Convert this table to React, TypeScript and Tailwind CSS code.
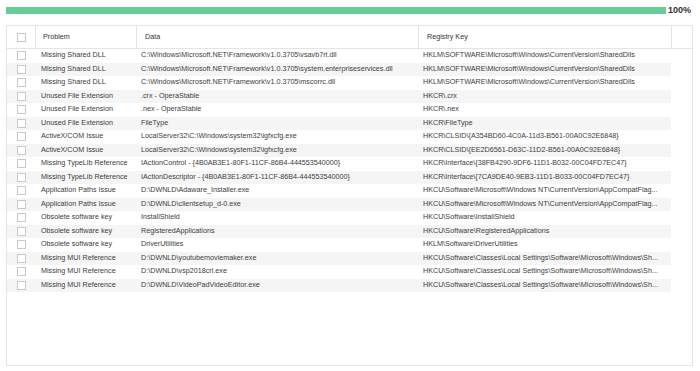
const rows: [string, string, string][] = [
  ["Missing Shared DLL", "C:\\Windows\\Microsoft.NET\\Framework\\v1.0.3705\\vsavb7rt.dll", "HKLM\\SOFTWARE\\Microsoft\\Windows\\CurrentVersion\\SharedDlls"],
  ["Missing Shared DLL", "C:\\Windows\\Microsoft.NET\\Framework\\v1.0.3705\\system.enterpriseservices.dll", "HKLM\\SOFTWARE\\Microsoft\\Windows\\CurrentVersion\\SharedDlls"],
  ["Missing Shared DLL", "C:\\Windows\\Microsoft.NET\\Framework\\v1.0.3705\\mscorrc.dll", "HKLM\\SOFTWARE\\Microsoft\\Windows\\CurrentVersion\\SharedDlls"],
  ["Unused File Extension", ".crx - OperaStable", "HKCR\\.crx"],
  ["Unused File Extension", ".nex - OperaStable", "HKCR\\.nex"],
  ["Unused File Extension", "FileType", "HKCR\\FileType"],
  ["ActiveX/COM Issue", "LocalServer32\\C:\\Windows\\system32\\igfxcfg.exe", "HKCR\\CLSID\\{A354BD60-4C0A-11d3-B561-00A0C92E6848}"],
  ["ActiveX/COM Issue", "LocalServer32\\C:\\Windows\\system32\\igfxcfg.exe", "HKCR\\CLSID\\{EE2D6561-D63C-11D2-B561-00A0C92E6848}"],
  ["Missing TypeLib Reference", "IActionControl - {4B0AB3E1-80F1-11CF-86B4-444553540000}", "HKCR\\Interface\\{38FB4290-9DF6-11D1-B032-00C04FD7EC47}"],
  ["Missing TypeLib Reference", "IActionDescriptor - {4B0AB3E1-80F1-11CF-86B4-444553540000}", "HKCR\\Interface\\{7CA9DE40-9EB3-11D1-B033-00C04FD7EC47}"],
  ["Application Paths Issue", "D:\\DWNLD\\Adaware_Installer.exe", "HKCU\\Software\\Microsoft\\Windows NT\\CurrentVersion\\AppCompatFlag..."],
  ["Application Paths Issue", "D:\\DWNLD\\clientsetup_d-0.exe", "HKCU\\Software\\Microsoft\\Windows NT\\CurrentVersion\\AppCompatFlag..."],
  ["Obsolete software key", "InstallShield", "HKCU\\Software\\InstallShield"],
  ["Obsolete software key", "RegisteredApplications", "HKCU\\Software\\RegisteredApplications"],
  ["Obsolete software key", "DriverUtilities", "HKLM\\Software\\DriverUtilities"],
  ["Missing MUI Reference", "D:\\DWNLD\\youtubemoviemaker.exe", "HKCU\\Software\\Classes\\Local Settings\\Software\\Microsoft\\Windows\\Sh..."],
  ["Missing MUI Reference", "D:\\DWNLD\\vsp2018crl.exe", "HKCU\\Software\\Classes\\Local Settings\\Software\\Microsoft\\Windows\\Sh..."],
  ["Missing MUI Reference", "D:\\DWNLD\\VideoPadVideoEditor.exe", "HKCU\\Software\\Classes\\Local Settings\\Software\\Microsoft\\Windows\\Sh..."],
]

function Box() {
  return <div className="w-[9px] h-[9px] border border-[#c9c9c9] bg-white" />
}

export default function App() {
  return (
    <div className="w-[700px] h-[371px] bg-white overflow-hidden font-['Liberation_Sans',Arial,sans-serif]">
      {/* progress */}
      <div className="flex items-center pt-[7px] pl-[6px]">
        <div className="w-[660px] h-[7px] bg-[#6acb97]" />
        <span className="ml-[2px] text-[9px] leading-[7px] font-bold text-[#333]">100%</span>
      </div>

      {/* results table */}
      <div className="mt-[11px] ml-[6px] w-[687px] h-[341px] border border-[#e4e4e4] text-[7.2px] text-[#3c3c3c]">
        <div className="flex h-[23px] border-b border-[#e4e4e4] text-[#333]">
          <div className="w-[29px] border-r border-[#e4e4e4] flex items-center justify-center">
            <Box />
          </div>
          <div className="w-[101px] border-r border-[#e4e4e4] flex items-center pl-[7px]">Problem</div>
          <div className="w-[282px] border-r border-[#e4e4e4] flex items-center pl-[8px]">Data</div>
          <div className="w-[253px] border-r border-[#e4e4e4] flex items-center pl-[8px]">Registry Key</div>
          <div className="flex-1" />
        </div>

        {rows.map(([problem, data, key], i) => (
          <div key={i} className="flex h-[13.5px] items-center">
            <div className={`flex h-full items-center w-[664px] ${i % 2 === 1 ? "bg-[#f5f5f5]" : ""}`}>
              <div className="w-[28px] flex justify-center pl-[1px]">
                <Box />
              </div>
              <div className="w-[101px] pl-[6px] whitespace-nowrap">{problem}</div>
              <div className="w-[282px] pl-[5px] whitespace-nowrap">{data}</div>
              <div className="w-[253px] pl-[5px] whitespace-nowrap">{key}</div>
            </div>
          </div>
        ))}
      </div>
    </div>
  )
}
